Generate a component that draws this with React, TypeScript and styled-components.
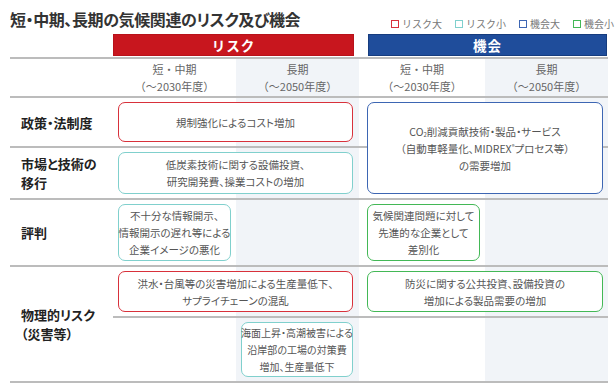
import React from "react";
import styled, { createGlobalStyle } from "styled-components";

type Tone = "red" | "teal" | "blue" | "green";

const borderColors: Record<Tone, string> = {
  red: "#d8313b",
  teal: "#80d0cd",
  blue: "#3d66b3",
  green: "#43b856",
};

const COLUMNS = "103px 123px 123px 126px 123px";

// used inside the card data below, so defined first
const Sub = styled.sub`
  font-size: 6px;
  vertical-align: baseline;
  position: relative;
  top: 1px;
  line-height: 0;
`;

const Sup = styled.sup`
  font-size: 6px;
  vertical-align: baseline;
  position: relative;
  top: -4px;
  line-height: 0;
`;

const legend: { tone: Tone; label: string }[] = [
  { tone: "red", label: "リスク大" },
  { tone: "teal", label: "リスク小" },
  { tone: "blue", label: "機会大" },
  { tone: "green", label: "機会小" },
];

const rows = [
  { row: "2", label: ["政策・法制度"] },
  { row: "3", label: ["市場と技術の", "移行"] },
  { row: "4", label: ["評判"] },
  { row: "5 / 7", label: ["物理的リスク", "（災害等）"] },
];

type CardData = {
  tone: Tone;
  col: string;
  row: string;
  small?: boolean;
  lines: React.ReactNode[];
};

const cards: CardData[] = [
  { tone: "red", col: "2 / 4", row: "2", lines: ["規制強化によるコスト増加"] },
  {
    tone: "teal",
    col: "2 / 4",
    row: "3",
    lines: ["低炭素技術に関する設備投資、", "研究開発費、操業コストの増加"],
  },
  {
    tone: "blue",
    col: "4 / 6",
    row: "2 / 4",
    lines: [
      <>
        CO<Sub>2</Sub>削減貢献技術・製品・サービス
      </>,
      <>
        （自動車軽量化、MIDREX<Sup>®</Sup>プロセス等）
      </>,
      "の需要増加",
    ],
  },
  {
    tone: "teal",
    col: "2 / 3",
    row: "4",
    lines: ["不十分な情報開示、", "情報開示の遅れ等による", "企業イメージの悪化"],
  },
  {
    tone: "green",
    col: "4 / 5",
    row: "4",
    lines: ["気候関連問題に対して", "先進的な企業として", "差別化"],
  },
  {
    tone: "red",
    col: "2 / 4",
    row: "5",
    lines: ["洪水・台風等の災害増加による生産量低下、", "サプライチェーンの混乱"],
  },
  {
    tone: "green",
    col: "4 / 6",
    row: "5",
    lines: ["防災に関する公共投資、設備投資の", "増加による製品需要の増加"],
  },
  {
    tone: "teal",
    col: "3 / 4",
    row: "6",
    small: true,
    lines: ["海面上昇・高潮被害による", "沿岸部の工場の対策費", "増加、生産量低下"],
  },
];

const App: React.FC = () => {
  return (
    <Page>
      <GlobalStyle />
      <TitleRow>
        <Title>短・中期、長期の気候関連のリスク及び機会</Title>
        <Legend>
          {legend.map((item) => (
            <LegendItem key={item.label}>
              <Swatch $tone={item.tone} />
              {item.label}
            </LegendItem>
          ))}
        </Legend>
      </TitleRow>

      <BarRow>
        <Bar $tone="red">リスク</Bar>
        <Bar $tone="blue">機会</Bar>
      </BarRow>

      <Table>
        {/* shaded long-term columns */}
        <Shade $col={3} />
        <Shade $col={5} />

        {/* row rules */}
        <Rule $row={1} $from={1} />
        <Rule $row={2} $from={1} />
        <Rule $row={3} $from={1} />
        <Rule $row={4} $from={1} />
        <Rule $row={5} $from={2} />
        <Rule $row={6} $from={1} />

        <ColHead $col={2}>
          短・中期
          <br />
          （〜2030年度）
        </ColHead>
        <ColHead $col={3}>
          長期
          <br />
          （〜2050年度）
        </ColHead>
        <ColHead $col={4}>
          短・中期
          <br />
          （〜2030年度）
        </ColHead>
        <ColHead $col={5}>
          長期
          <br />
          （〜2050年度）
        </ColHead>

        {rows.map((r) => (
          <RowLabel key={r.row} $row={r.row}>
            {r.label.map((l, i) => (
              <div key={i}>{l}</div>
            ))}
          </RowLabel>
        ))}

        {cards.map((c, i) => (
          <Card
            key={i}
            $tone={c.tone}
            $col={c.col}
            $row={c.row}
            $small={c.small}
          >
            <div>
              {c.lines.map((l, j) => (
                <div key={j}>{l}</div>
              ))}
            </div>
          </Card>
        ))}
      </Table>
    </Page>
  );
};

export default App;

// Styled Components
const GlobalStyle = createGlobalStyle`
  html, body {
    margin: 0;
    padding: 0;
    background: #fff;
  }
  body {
    font-family: "Noto Sans CJK JP", "Noto Sans", sans-serif;
    color: #333;
  }
`;

const Page = styled.div`
  width: 616px;
  height: 392px;
  box-sizing: border-box;
  padding: 8px 8px 0 10px;
  overflow: hidden;
`;

const TitleRow = styled.div`
  display: flex;
  justify-content: space-between;
  align-items: flex-end;
  height: 25px;
  margin-bottom: 1px;
`;

const Title = styled.h1`
  margin: 0;
  font-size: 16px;
  line-height: 22px;
  font-weight: 700;
  letter-spacing: -0.4px;
  color: #333;
  font-feature-settings: "palt";
  align-self: flex-start;
`;

const Legend = styled.div`
  display: flex;
  gap: 13px;
  margin-right: -6px;
  margin-bottom: 2px;
`;

const LegendItem = styled.div`
  display: flex;
  align-items: center;
  gap: 3px;
  font-size: 10px;
  line-height: 14px;
  color: #777;
`;

const Swatch = styled.span<{ $tone: Tone }>`
  width: 6px;
  height: 6px;
  border: 1.5px solid ${(p) => borderColors[p.$tone]};
  background: #fff;
`;

const BarRow = styled.div`
  display: grid;
  grid-template-columns: ${COLUMNS};
  height: 20px;
`;

const Bar = styled.div<{ $tone: "red" | "blue" }>`
  grid-column: ${(p) => (p.$tone === "red" ? "2 / 4" : "4 / 6")};
  margin: ${(p) => (p.$tone === "red" ? "0 5px 0 0" : "0 1px 0 9px")};
  background: ${(p) => (p.$tone === "red" ? "#c8161e" : "#1f4d9b")};
  border: 1px solid ${(p) => (p.$tone === "red" ? "#b8121a" : "#163c7e")};
  color: #fff;
  font-size: 13.5px;
  font-weight: 700;
  letter-spacing: 1px;
  display: flex;
  align-items: center;
  justify-content: center;
`;

const Table = styled.div`
  display: grid;
  grid-template-columns: ${COLUMNS};
  grid-template-rows: 39px 50px 52px 67px 51px 65px;
  margin-top: 3px;
  border-top: 2px solid #bcbcbc;
`;

const Shade = styled.div<{ $col: number }>`
  grid-column: ${(p) => p.$col};
  grid-row: 1 / -1;
  background: #f1f4f8;
`;

const Rule = styled.div<{ $row: number; $from: number }>`
  grid-column: ${(p) => p.$from} / -1;
  grid-row: ${(p) => p.$row};
  align-self: end;
  height: 2px;
  background: #bcbcbc;
`;

const ColHead = styled.div<{ $col: number }>`
  grid-column: ${(p) => p.$col};
  grid-row: 1;
  align-self: center;
  margin-bottom: 2px;
  text-align: center;
  font-size: 11px;
  line-height: 17px;
  color: #666;
`;

const RowLabel = styled.div<{ $row: string }>`
  grid-column: 1;
  grid-row: ${(p) => p.$row};
  align-self: center;
  margin-bottom: 2px;
  padding-left: 11px;
  font-size: 13px;
  line-height: 19px;
  font-weight: 700;
  color: #222;
  font-feature-settings: "palt";
`;

const Card = styled.div<{
  $tone: Tone;
  $col: string;
  $row: string;
  $small?: boolean;
}>`
  grid-column: ${(p) => p.$col};
  grid-row: ${(p) => p.$row};
  margin: 4px ${(p) => (p.$col.endsWith("4") ? 6 : 5)}px 6px
    ${(p) => (p.$col.startsWith("4") ? 8 : 5)}px;
  border: 1.5px solid ${(p) => borderColors[p.$tone]};
  border-radius: 7px;
  background: #fff;
  display: flex;
  align-items: center;
  justify-content: center;
  text-align: center;
  white-space: nowrap;
  font-size: ${(p) => (p.$small ? 10 : 10.5)}px;
  line-height: 17px;
  color: #555;
  font-feature-settings: "palt";
`;
